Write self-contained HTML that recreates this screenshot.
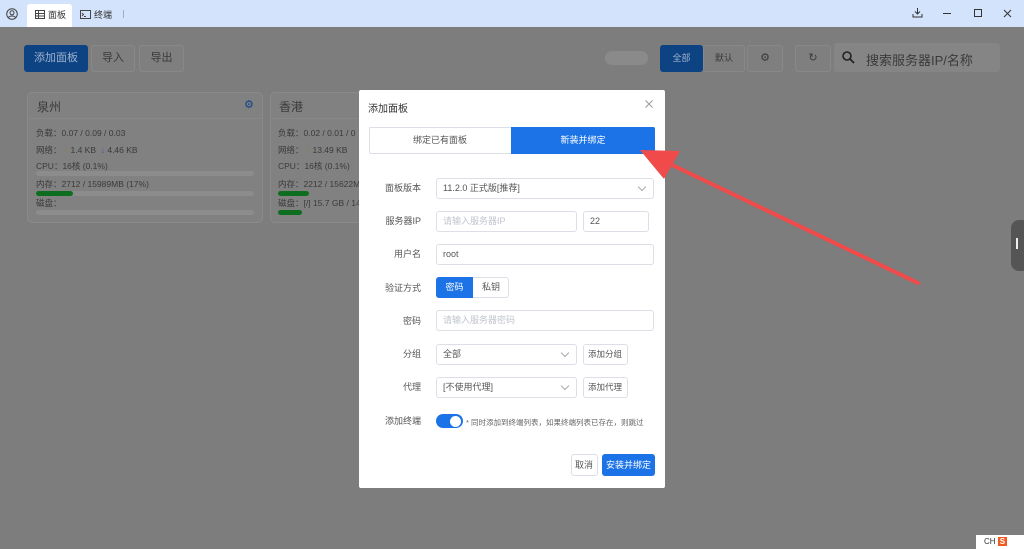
<!DOCTYPE html>
<html><head><meta charset="utf-8"><style>
*{box-sizing:border-box;margin:0;padding:0}
body{width:1024px;height:549px;overflow:hidden;font-family:"Liberation Sans","Noto Sans CJK SC",sans-serif;background:#7d7d7d;position:relative;font-size:12px;color:#333}
.abs{position:absolute;white-space:nowrap}
.top{left:0;top:0;width:1024px;height:27px;background:#d3e3fb}
.g{color:#3a3a3a}
.btn{position:absolute;border:1px solid #888;border-radius:3px;background:#7f7f7f;color:#3a3a3a;font-size:11px;text-align:center}
.card{position:absolute;background:#818181;border:1px solid #8a8a8a;border-radius:5px}
.bar{position:absolute;height:5px;background:#8c8c8c;border-radius:3px}
.dlg{left:359px;top:90px;width:306px;height:398px;background:#fff;border-radius:2px}
.lbl{position:absolute;font-size:9px;line-height:12px;color:#555;text-align:right;width:62px;left:0;white-space:nowrap}
.inp{position:absolute;border:1px solid #dcdfe6;border-radius:3px;height:21px;font-size:9px;color:#555;padding:0 6px;line-height:19px;white-space:nowrap;overflow:hidden}
.ph{color:#c0c4cc}
.chev{position:absolute;right:8px;top:5px;width:6px;height:6px;border-right:1px solid #aaa;border-bottom:1px solid #aaa;transform:rotate(45deg)}
</style></head><body>
<div class="abs top"></div>
<svg class="abs" style="left:6px;top:8px" width="12" height="12" viewBox="0 0 12 12"><circle cx="6" cy="6" r="5.3" fill="none" stroke="#444"/><circle cx="6" cy="4.8" r="2" fill="none" stroke="#444"/><path d="M2.5 9.5c1-2 6-2 7 0" fill="none" stroke="#444"/></svg>
<div class="abs" style="left:27px;top:4px;width:45px;height:23px;background:#fff;border-radius:3px 3px 0 0"></div>
<svg class="abs" style="left:35px;top:10px" width="10" height="9"><rect x=".5" y=".5" width="9" height="8" fill="none" stroke="#444"/><path d="M.5 3.5h9M.5 6h9M3.5.5v8" stroke="#444"/></svg>
<div class="abs" style="left:48px;top:8px;font-size:9px;color:#333">面板</div>
<svg class="abs" style="left:80px;top:10px" width="11" height="9"><rect x=".5" y=".5" width="10" height="8" fill="none" stroke="#444"/><path d="M2 3l1.5 1.5L2 6M4 6.5h2" stroke="#444" fill="none"/></svg>
<div class="abs" style="left:94px;top:8px;font-size:9px;color:#333">终端</div>
<div class="abs" style="left:123px;top:10px;width:1px;height:8px;background:#aab"></div>
<svg class="abs" style="left:912px;top:7px" width="11" height="11"><path d="M5.5 1v6M3 4.5l2.5 2.5L8 4.5M1 7v3h9V7" fill="none" stroke="#333"/></svg>
<div class="abs" style="left:943px;top:13px;width:8px;height:1px;background:#333"></div>
<div class="abs" style="left:974px;top:9px;width:8px;height:8px;border:1px solid #333"></div>
<svg class="abs" style="left:1003px;top:9px" width="9" height="9"><path d="M1 1l7 7M8 1L1 8" stroke="#333"/></svg>

<div class="btn" style="left:24px;top:45px;width:64px;height:27px;background:#0d4283;border-color:#0d4283;color:#9fb3cc;line-height:25px">添加面板</div>
<div class="btn" style="left:91px;top:45px;width:44px;height:27px;line-height:25px">导入</div>
<div class="btn" style="left:139px;top:45px;width:45px;height:27px;line-height:25px">导出</div>
<div class="abs" style="left:605px;top:51px;width:43px;height:14px;border-radius:7px;background:#8a8a8a"></div>
<div class="btn" style="left:660px;top:45px;width:43px;height:27px;background:#0d4283;border-color:#0d4283;color:#9fb3cc;line-height:25px;font-size:9px">全部</div>
<div class="btn" style="left:703px;top:45px;width:42px;height:27px;line-height:25px;font-size:9px">默认</div>
<div class="btn" style="left:747px;top:45px;width:36px;height:27px;line-height:25px">⚙</div>
<div class="btn" style="left:795px;top:45px;width:36px;height:27px;line-height:25px">↻</div>
<div class="abs" style="left:834px;top:43px;width:166px;height:29px;background:#858585;border-radius:3px"></div>
<svg class="abs" style="left:842px;top:51px" width="13" height="13"><circle cx="5" cy="5" r="4" fill="none" stroke="#222" stroke-width="1.6"/><path d="M8 8l4 4" stroke="#222" stroke-width="1.8"/></svg>
<div class="abs" style="left:866px;top:50px;font-size:13px;color:#3a3a3a">搜索服务器IP/名称</div>

<div class="card" style="left:27px;top:92px;width:236px;height:131px"></div>
<div class="abs" style="left:27px;top:118px;width:236px;height:1px;background:#888"></div>
<div class="abs g" style="left:37px;top:98px;font-size:12px">泉州</div>
<div class="abs" style="left:244px;top:98px;font-size:11px;color:#0d4283">⚙</div>
<div class="abs g" style="left:36px;top:125px;font-size:8.5px;line-height:16.5px">负载：0.07 / 0.09 / 0.03<br>网络： <span style="color:#9a7a40">↑</span> 1.4 KB &nbsp;<span style="color:#34569a">↓</span> 4.46 KB<br>CPU：16核 (0.1%)</div>
<div class="bar" style="left:36px;top:171px;width:218px"></div>
<div class="abs g" style="left:36px;top:178px;font-size:8.5px">内存：2712 / 15989MB (17%)</div>
<div class="bar" style="left:36px;top:191px;width:218px"></div><div class="bar" style="left:36px;top:191px;width:37px;background:#0d6e1f"></div>
<div class="abs g" style="left:36px;top:197px;font-size:8.5px">磁盘：</div>
<div class="bar" style="left:36px;top:210px;width:218px"></div>
<div class="card" style="left:270px;top:92px;width:100px;height:131px"></div>
<div class="abs" style="left:270px;top:118px;width:100px;height:1px;background:#888"></div>
<div class="abs g" style="left:279px;top:98px;font-size:12px">香港</div>
<div class="abs g" style="left:278px;top:125px;font-size:8.5px;line-height:16.5px">负载：0.02 / 0.01 / 0<br>网络： <span style="color:#9a7a40">↑</span> 13.49 KB<br>CPU：16核 (0.1%)</div>
<div class="abs g" style="left:278px;top:178px;font-size:8.5px">内存：2212 / 15622M</div>
<div class="bar" style="left:278px;top:191px;width:31px;background:#0d6e1f"></div>
<div class="abs g" style="left:278px;top:197px;font-size:8.5px">磁盘：[/] 15.7 GB / 14</div>
<div class="bar" style="left:278px;top:210px;width:24px;background:#0d6e1f"></div>

<div class="abs" style="left:1011px;top:220px;width:13px;height:51px;background:#555;border-radius:8px 0 0 8px"></div>
<div class="abs" style="left:1016px;top:238px;width:2px;height:11px;background:#eee"></div>
<div class="abs" style="left:976px;top:535px;width:48px;height:14px;background:#fff;font-size:8px;color:#333;padding:2px 0 0 8px">CH <span style="color:#fff;background:#f05a22;padding:0 2px;font-weight:bold">S</span></div>

<div class="abs dlg">
<div class="abs" style="left:9px;top:10px;font-size:10px;color:#333">添加面板</div>
<svg class="abs" style="left:286px;top:10px" width="8" height="8"><path d="M.5 .5l7 7M7.5 .5l-7 7" stroke="#999"/></svg>
<div class="abs" style="left:10px;top:37px;width:286px;height:27px;border:1px solid #dcdfe6;border-radius:2px"></div>
<div class="abs" style="left:10px;top:37px;width:142px;height:27px;line-height:27px;text-align:center;font-size:9px;color:#555">绑定已有面板</div>
<div class="abs" style="left:152px;top:37px;width:144px;height:27px;line-height:27px;text-align:center;font-size:9px;color:#fff;background:#1c73e8;border-radius:0 2px 2px 0">新装并绑定</div>
<div class="lbl" style="top:92px">面板版本</div>
<div class="inp" style="left:77px;top:88px;width:218px">11.2.0 正式版[推荐]<div class="chev"></div></div>
<div class="lbl" style="top:125px">服务器IP</div>
<div class="inp ph" style="left:77px;top:121px;width:141px">请输入服务器IP</div>
<div class="inp" style="left:224px;top:121px;width:66px">22</div>
<div class="lbl" style="top:158px">用户名</div>
<div class="inp" style="left:77px;top:154px;width:218px">root</div>
<div class="lbl" style="top:192px">验证方式</div>
<div class="abs" style="left:77px;top:187px;width:73px;height:21px;border:1px solid #dcdfe6;border-radius:3px"></div>
<div class="abs" style="left:77px;top:187px;width:37px;height:21px;background:#1c73e8;border-radius:3px 0 0 3px;color:#fff;font-size:9px;text-align:center;line-height:21px">密码</div>
<div class="abs" style="left:114px;top:187px;width:36px;height:21px;color:#555;font-size:9px;text-align:center;line-height:21px">私钥</div>
<div class="lbl" style="top:225px">密码</div>
<div class="inp ph" style="left:77px;top:220px;width:218px">请输入服务器密码</div>
<div class="lbl" style="top:258px">分组</div>
<div class="inp" style="left:77px;top:254px;width:141px">全部<div class="chev"></div></div>
<div class="inp" style="left:224px;top:254px;width:45px;padding:0 4px;font-size:8.5px">添加分组</div>
<div class="lbl" style="top:291px">代理</div>
<div class="inp" style="left:77px;top:287px;width:141px">[不使用代理]<div class="chev"></div></div>
<div class="inp" style="left:224px;top:287px;width:45px;padding:0 4px;font-size:8.5px">添加代理</div>
<div class="lbl" style="top:325px">添加终端</div>
<div class="abs" style="left:77px;top:324px;width:27px;height:14px;background:#1c73e8;border-radius:7px"></div>
<div class="abs" style="left:91px;top:326px;width:11px;height:11px;background:#fff;border-radius:50%"></div>
<div class="abs" style="left:107px;top:327px;font-size:7.5px;color:#666">* 同时添加到终端列表，如果终端列表已存在，则跳过</div>
<div class="inp" style="left:212px;top:364px;width:27px;height:22px;line-height:20px;padding:0 3px">取消</div>
<div class="abs" style="left:243px;top:364px;width:53px;height:22px;background:#1c73e8;border-radius:3px;color:#fff;font-size:9px;text-align:center;line-height:22px">安装并绑定</div>
</div>

<svg class="abs" style="left:0;top:0" width="1024" height="549"><path d="M918 283L668 163" stroke="#f04a4a" stroke-width="4" stroke-linecap="round"/><polygon points="640,150 680,151 664,179" fill="#f04a4a"/></svg>
</body></html>
